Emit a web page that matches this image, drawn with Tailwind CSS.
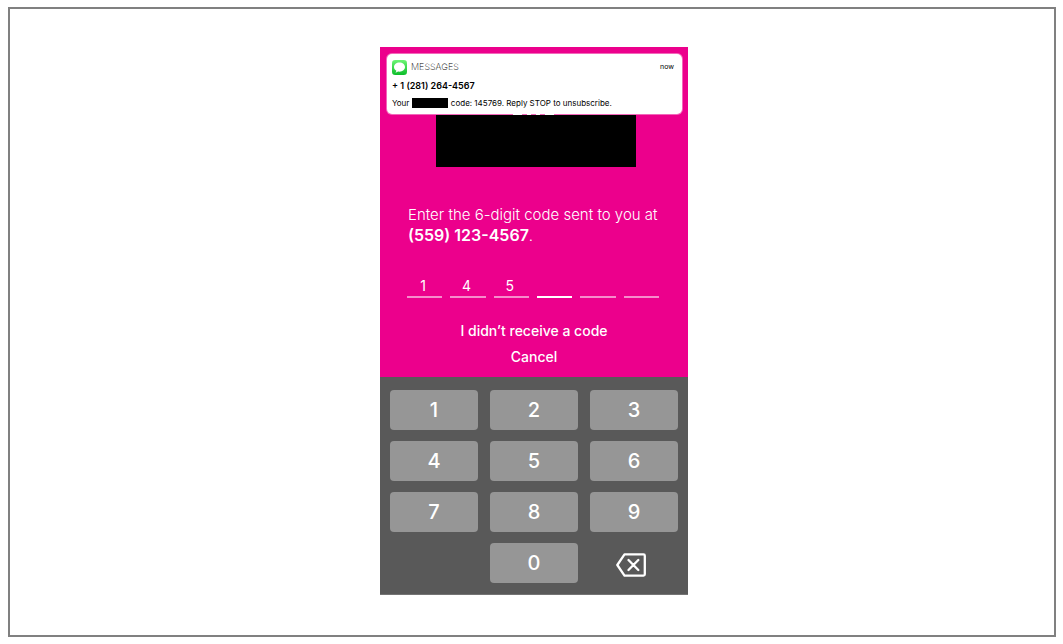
<!DOCTYPE html>
<html lang="en">
<head>
<meta charset="utf-8">
<meta name="viewport" content="width=device-width, initial-scale=1">
<title>Enter code</title>
<script src="https://cdn.jsdelivr.net/npm/@tailwindcss/browser@4"></script>
</head>
<body class="min-h-screen bg-white pt-[7px] pr-[7px] pb-[7px] pl-2 flex font-['Inter','Liberation_Sans',sans-serif]">
<div class="flex-1 border-2 border-[#808080] flex items-start justify-center pt-[38px] pb-8 pl-1">
  <main class="relative w-full max-w-[308px] bg-[#ec008c] text-white">
    <section aria-label="Notification" class="absolute left-[7px] right-[6px] top-[7px] h-[60px] rounded-[5px] bg-white px-[5px] pt-[5px] text-black ring-1 ring-white/40">
      <header class="flex items-center h-4">
        <svg class="size-[15px]" viewBox="0 0 30 30" aria-hidden="true">
          <defs><linearGradient id="g" x1="0" y1="0" x2="0" y2="1"><stop offset="0" stop-color="#6df575"/><stop offset="1" stop-color="#0cbd2a"/></linearGradient></defs>
          <rect width="30" height="30" rx="6.5" fill="url(#g)"/>
          <path fill="#fff" d="M15 5C8.700 5 4 9 4 14c0 3.200 1.900 6 4.800 7.600-.3 1.400-1 2.500-2.100 3.400 2 0 3.900-.8 5.200-2 1 .2 2 .3 3.100.3 6.200 0 11-4.100 11-9.300S21.200 5 15 5z"/>
        </svg>
        <h2 class="ml-1 text-[9px] font-extralight">MESSAGES</h2>
        <time class="ml-auto mr-[3px] text-[7px]">now</time>
      </header>
      <h3 class="mt-[5px] text-[9px] leading-3 font-semibold">+ 1 (281) 264-4567</h3>
      <p class="mt-[5px] flex items-center text-[8px] leading-3 whitespace-pre">Your <span class="h-[10px] w-9 bg-black"></span><span class="ml-px"> code: 145769. Reply STOP to unsubscribe.</span></p>
    </section>
    <div class="px-7 pt-[66px]">
      <div class="ml-7 w-[200px]">
        <div class="ml-[77px] flex h-[2px] w-[41px] justify-between" aria-hidden="true"><span class="w-[9px] bg-white"></span><span class="w-1 bg-white"></span><span class="w-1 bg-white"></span><span class="w-[9px] bg-white"></span></div>
        <div class="h-[52px] bg-black"></div>
      </div>
      <h1 class="mt-[38px] text-[15px] leading-5 font-light whitespace-nowrap">Enter the 6-digit code sent to you at<br><strong class="text-[16px] font-semibold">(559) 123-4567</strong>.</h1>
      <form class="-ml-px mt-[29px] grid w-[252px] grid-cols-6 gap-2 text-center text-[14px]">
        <input aria-label="Digit 1" value="1" class="h-[23px] w-full border-b-2 border-white/55 pb-px pr-[3px] text-center outline-none">
        <input aria-label="Digit 2" value="4" class="h-[23px] w-full border-b-2 border-white/55 pb-px pr-[3px] text-center outline-none">
        <input aria-label="Digit 3" value="5" class="h-[23px] w-full border-b-2 border-white/55 pb-px pr-[3px] text-center outline-none">
        <input aria-label="Digit 4" class="h-[23px] w-full border-b-2 border-white text-center outline-none">
        <input aria-label="Digit 5" class="h-[23px] w-full border-b-2 border-white/55 text-center outline-none">
        <input aria-label="Digit 6" class="h-[23px] w-full border-b-2 border-white/55 text-center outline-none">
      </form>
      <div class="mt-[19px] flex flex-col items-center text-[14px] font-medium">
        <button type="button" class="h-[26px]">I didn’t receive a code</button>
        <button type="button" class="h-[26px]">Cancel</button>
      </div>
    </div>
    <div class="mt-2 grid grid-cols-3 gap-x-3 gap-y-[11px] border-b border-[#747474] bg-[#595959] px-[10px] pt-[13px] pb-[11px] text-[20px] font-medium">
      <button type="button" class="h-10 rounded-[4px] bg-[#969696]">1</button>
      <button type="button" class="h-10 rounded-[4px] bg-[#969696]">2</button>
      <button type="button" class="h-10 rounded-[4px] bg-[#969696]">3</button>
      <button type="button" class="h-10 rounded-[4px] bg-[#969696]">4</button>
      <button type="button" class="h-10 rounded-[4px] bg-[#969696]">5</button>
      <button type="button" class="h-10 rounded-[4px] bg-[#969696]">6</button>
      <button type="button" class="h-10 rounded-[4px] bg-[#969696]">7</button>
      <button type="button" class="h-10 rounded-[4px] bg-[#969696]">8</button>
      <button type="button" class="h-10 rounded-[4px] bg-[#969696]">9</button>
      <button type="button" class="col-start-2 h-10 rounded-[4px] bg-[#969696]">0</button>
      <button type="button" aria-label="Delete" class="flex h-10 items-center justify-center pt-1 pr-[6px]">
        <svg class="h-6 w-[30px]" viewBox="0 0 30 24" fill="none" stroke="#fff" stroke-width="2.300" stroke-linecap="round" stroke-linejoin="round" aria-hidden="true"><path d="M8.500 1.400H27.500Q28.800 1.400 28.800 2.700V21.300Q28.800 22.600 27.500 22.600H8.500L1.300 12ZM12.500 7L22.300 17M22.300 7L12.500 17"/></svg>
      </button>
    </div>
  </main>
</div>
</body>
</html>
